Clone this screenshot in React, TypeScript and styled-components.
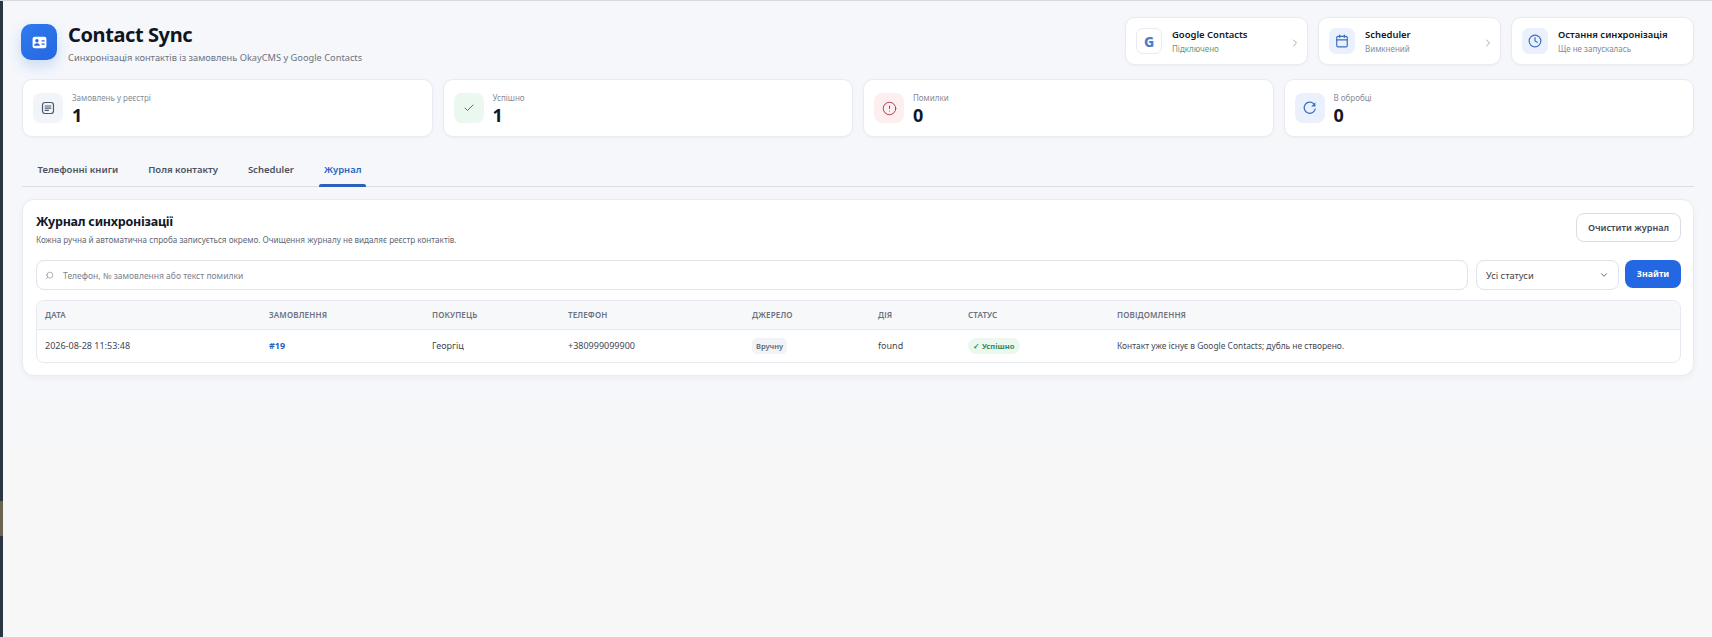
import React from 'react';
import styled, { createGlobalStyle } from 'styled-components';
import { Calendar, Check, ChevronDown, ChevronRight, CircleAlert, Clock, Search } from 'lucide-react';

const GlobalStyle = createGlobalStyle`
  * { box-sizing: border-box; }
  html, body { margin: 0; padding: 0; height: 100%; }
  body {
    font-family: "Noto Sans", "Open Sans", sans-serif;
    background: #f7f7f8;
    color: #111827;
  }
`;

const Shell = styled.div`
  display: flex;
  height: 637px;
  overflow: hidden;
  border-top: 1px solid #d6dae1;
`;

const SideEdge = styled.div`
  width: 3px;
  flex: none;
  background: linear-gradient(#2b3644 0 500px, #6b6450 500px 535px, #2b3644 535px);
`;

const Page = styled.main`
  flex: 1;
  min-width: 0;
  padding: 16px 18px 0 19px;
  background: linear-gradient(#f5f7fb 0, #f5f7fb 380px, #f7f7f8 450px);
`;

const Header = styled.header`
  display: flex;
  justify-content: space-between;
  align-items: center;
  gap: 16px;
  height: 48px;
`;

const Brand = styled.div`
  display: flex;
  align-items: center;
  gap: 11px;
  margin: 2px 0 0 -1px;
`;

const BrandText = styled.div`
  padding-top: 2px;
`;

const Logo = styled.div`
  width: 36px;
  height: 36px;
  border-radius: 10px;
  background: linear-gradient(135deg, #2f7af0, #2567e0);
  box-shadow: 0 6px 14px rgba(37, 103, 224, 0.2);
  display: flex;
  align-items: center;
  justify-content: center;
`;

const Title = styled.h1`
  margin: 0;
  font-size: 20px;
  line-height: 26px;
  font-weight: 700;
  letter-spacing: -0.4px;
  color: #0f1521;
`;

const Subtitle = styled.p`
  margin: 3px 0 0;
  font-size: 9.25px;
  line-height: 14px;
  color: #6b7280;
`;

const HeaderCards = styled.div`
  display: flex;
  gap: 10px;
`;

const HeaderCard = styled.div`
  width: 183px;
  height: 48px;
  padding: 0 6px 0 10px;
  background: #fff;
  border: 1px solid #e8ebf1;
  border-radius: 10px;
  box-shadow: 0 1px 3px rgba(17, 24, 39, 0.04);
  display: flex;
  align-items: center;
  gap: 10px;
`;

const HeaderIcon = styled.div<{ $outlined?: boolean }>`
  width: 26px;
  height: 26px;
  flex: none;
  border-radius: 7px;
  background: ${p => (p.$outlined ? '#fff' : '#eaf1fd')};
  border: ${p => (p.$outlined ? '1px solid #e8ebf1' : 'none')};
  color: #3a6ebd;
  display: flex;
  align-items: center;
  justify-content: center;
`;

const GoogleLetter = styled.span`
  font-size: 14px;
  font-weight: 800;
  color: #4f79c9;
`;

const HeaderText = styled.div`
  flex: 1;
  min-width: 0;
  padding-top: 1px;
`;

const HeaderName = styled.div`
  font-size: 9.45px;
  line-height: 14px;
  font-weight: 600;
  color: #111827;
`;

const HeaderNote = styled.div<{ $ok?: boolean }>`
  margin-top: 1px;
  font-size: 8px;
  line-height: 12px;
  color: ${p => (p.$ok ? '#5c9c76' : '#858b96')};
`;

const Arrow = styled(ChevronRight)`
  margin-top: 3px;
  color: #8b929d;
  stroke-width: 1.6;
  flex: none;
`;

const Stats = styled.section`
  display: grid;
  grid-template-columns: repeat(4, 1fr);
  gap: 10px;
  margin-top: 14px;
`;

const StatCard = styled.div`
  height: 58px;
  padding: 0 10px;
  background: #fff;
  border: 1px solid #e8ebf1;
  border-radius: 10px;
  box-shadow: 0 1px 3px rgba(17, 24, 39, 0.04);
  display: flex;
  align-items: center;
  gap: 9px;
`;

const toneColors = {
  gray: ['#f1f4f9', '#4e5a6b'],
  green: ['#ebf8f0', '#2f8a57'],
  red: ['#fdeeef', '#b5404f'],
  blue: ['#eaf1fd', '#3a6ebd'],
};

const StatIcon = styled.div<{ $tone: keyof typeof toneColors }>`
  width: 30px;
  height: 30px;
  flex: none;
  border-radius: 8px;
  background: ${p => toneColors[p.$tone][0]};
  color: ${p => toneColors[p.$tone][1]};
  display: flex;
  align-items: center;
  justify-content: center;
`;

const StatLabel = styled.div`
  font-size: 8px;
  line-height: 12px;
  color: #858b96;
`;

const StatValue = styled.div`
  margin-top: 1px;
  font-size: 18px;
  line-height: 20px;
  font-weight: 700;
  color: #111827;
`;

const Tabs = styled.nav`
  display: flex;
  gap: 21px;
  height: 50px;
  padding: 0 11px;
  border-bottom: 1px solid #d9dde5;
`;

const Tab = styled.button<{ $active?: boolean }>`
  position: relative;
  padding: 17px 4.5px 0;
  height: 49px;
  border: 0;
  background: none;
  font: 600 9.5px/14px "Noto Sans", sans-serif;
  color: ${p => (p.$active ? '#2a62bd' : '#4a5361')};

  &::after {
    content: '';
    display: ${p => (p.$active ? 'block' : 'none')};
    position: absolute;
    left: 0;
    right: 0;
    bottom: -1px;
    height: 3px;
    border-radius: 2px 2px 0 0;
    background: #2a62bd;
  }
`;

const Panel = styled.section`
  margin-top: 12px;
  height: 177px;
  padding: 13px 12px 13px 13px;
  background: #fff;
  border: 1px solid #e8ebf1;
  border-radius: 12px;
  box-shadow: 0 2px 6px rgba(17, 24, 39, 0.04);
`;

const PanelHead = styled.div`
  display: flex;
  justify-content: space-between;
  align-items: flex-start;
  height: 47px;
`;

const PanelTitle = styled.h2`
  margin: 0;
  font-size: 12.5px;
  line-height: 18px;
  font-weight: 700;
  letter-spacing: -0.25px;
  color: #111827;
`;

const PanelNote = styled.p`
  margin: 3px 0 0;
  font-size: 8.15px;
  line-height: 12px;
  color: #5f6875;
`;

const ClearButton = styled.button`
  width: 105px;
  height: 29px;
  background: #fff;
  border: 1px solid #d9dde5;
  border-radius: 8px;
  font: 600 9.1px "Noto Sans", sans-serif;
  color: #3f4753;
`;

const Filters = styled.div`
  display: flex;
  gap: 8px;
  align-items: flex-start;
`;

const SearchBox = styled.div`
  flex: 1;
  height: 30px;
  padding: 0 8px;
  border: 1px solid #dfe3ea;
  border-radius: 8px;
  background: #fff;
  display: flex;
  align-items: center;
  gap: 9px;
  font-size: 8.5px;
  color: #7b828e;
`;

const SearchIcon = styled(Search)`
  transform: scaleX(-1);
  stroke-width: 1.6;
`;

const StatusSelect = styled.div`
  width: 143px;
  height: 30px;
  padding: 0 9px;
  border: 1px solid #dfe3ea;
  border-radius: 8px;
  background: #fff;
  display: flex;
  align-items: center;
  justify-content: space-between;
  font-size: 9.3px;
  color: #3f4753;
`;

const FindButton = styled.button`
  width: 56px;
  height: 28px;
  margin-left: -2px;
  border: 0;
  border-radius: 8px;
  background: #2368e2;
  font: 700 8.8px "Noto Sans", sans-serif;
  color: #fff;
`;

const TableWrap = styled.div`
  margin-top: 10px;
  border: 1px solid #e6e9ef;
  border-radius: 8px;
  overflow: hidden;
`;

const Table = styled.table`
  width: 100%;
  border-collapse: collapse;
  table-layout: fixed;
`;

const Th = styled.th<{ $w?: number }>`
  width: ${p => (p.$w ? `${p.$w}px` : 'auto')};
  height: 28px;
  padding: 0 8px;
  background: #f7f8fa;
  border-bottom: 1px solid #e6e9ef;
  text-align: left;
  font-size: 8px;
  font-weight: 600;
  letter-spacing: 0.15px;
  color: #6b7280;
`;

const Td = styled.td`
  height: 33px;
  padding: 0 8px;
  font-size: 9px;
  color: #3f4753;
`;

const MessageCell = styled(Td)`
  font-size: 8.4px;
`;

const OrderLink = styled.a`
  font-weight: 700;
  color: #2a62bd;
`;

const SourceTag = styled.span`
  display: inline-block;
  padding: 2px 4px;
  border-radius: 5px;
  background: #f1f3f7;
  font-size: 7.5px;
  line-height: 12px;
  font-weight: 600;
  color: #5a6472;
`;

const StatusTag = styled.span`
  display: inline-block;
  padding: 2px 5px;
  border-radius: 9px;
  background: #ebf8f0;
  font-size: 7.6px;
  line-height: 12px;
  font-weight: 700;
  color: #2f8a57;
`;

const CardIcon = () => (
  <svg width="17" height="17" viewBox="0 0 16 16" fill="none">
    <rect x="1.5" y="2.5" width="13" height="11" rx="2" fill="#fff" />
    <circle cx="5.6" cy="6.4" r="1.6" fill="#2567e0" />
    <path d="M3 11c0-1.6 1.2-2.3 2.6-2.3s2.6.7 2.6 2.3z" fill="#2567e0" />
    <path d="M10 6.5h2.8M10 9.5h2.8" stroke="#2567e0" strokeWidth="1.2" />
  </svg>
);

const ListIcon = () => (
  <svg width="14" height="14" viewBox="0 0 14 14" fill="none" stroke="currentColor" strokeWidth="1.2" strokeLinecap="round">
    <rect x="1.5" y="1.5" width="11" height="11" rx="2.5" />
    <path d="M4.2 5h5.6M4.2 7.2h5.6M4.2 9.4h3.2" />
  </svg>
);

const RefreshIcon = () => (
  <svg width="16" height="16" viewBox="0 0 16 16" fill="none">
    <path d="M13.2 9.2A5.6 5.6 0 1 1 11.6 3.6" stroke="currentColor" strokeWidth="1.2" strokeLinecap="round" />
    <path d="M13.4 2.2v4.2H9.2z" fill="currentColor" />
  </svg>
);

const columns = [
  { label: 'Дата', width: 224 },
  { label: 'Замовлення', width: 163 },
  { label: 'Покупець', width: 136 },
  { label: 'Телефон', width: 184 },
  { label: 'Джерело', width: 126 },
  { label: 'Дія', width: 90 },
  { label: 'Статус', width: 149 },
  { label: 'Повідомлення' },
];

const App = () => (
  <>
    <GlobalStyle />
    <Shell>
      <SideEdge />
      <Page>
        <Header>
          <Brand>
            <Logo><CardIcon /></Logo>
            <BrandText>
              <Title>Contact Sync</Title>
              <Subtitle>Синхронізація контактів із замовлень OkayCMS у Google Contacts</Subtitle>
            </BrandText>
          </Brand>
          <HeaderCards>
            <HeaderCard>
              <HeaderIcon $outlined><GoogleLetter>G</GoogleLetter></HeaderIcon>
              <HeaderText>
                <HeaderName>Google Contacts</HeaderName>
                <HeaderNote $ok>Підключено</HeaderNote>
              </HeaderText>
              <Arrow size={12} />
            </HeaderCard>
            <HeaderCard>
              <HeaderIcon><Calendar size={14} /></HeaderIcon>
              <HeaderText>
                <HeaderName>Scheduler</HeaderName>
                <HeaderNote>Вимкнений</HeaderNote>
              </HeaderText>
              <Arrow size={12} />
            </HeaderCard>
            <HeaderCard>
              <HeaderIcon><Clock size={14} /></HeaderIcon>
              <HeaderText>
                <HeaderName>Остання синхронізація</HeaderName>
                <HeaderNote>Ще не запускалась</HeaderNote>
              </HeaderText>
            </HeaderCard>
          </HeaderCards>
        </Header>

        <Stats>
          <StatCard>
            <StatIcon $tone="gray"><ListIcon /></StatIcon>
            <div><StatLabel>Замовлень у реєстрі</StatLabel><StatValue>1</StatValue></div>
          </StatCard>
          <StatCard>
            <StatIcon $tone="green"><Check size={12} /></StatIcon>
            <div><StatLabel>Успішно</StatLabel><StatValue>1</StatValue></div>
          </StatCard>
          <StatCard>
            <StatIcon $tone="red"><CircleAlert size={15} strokeWidth={1.6} /></StatIcon>
            <div><StatLabel>Помилки</StatLabel><StatValue>0</StatValue></div>
          </StatCard>
          <StatCard>
            <StatIcon $tone="blue"><RefreshIcon /></StatIcon>
            <div><StatLabel>В обробці</StatLabel><StatValue>0</StatValue></div>
          </StatCard>
        </Stats>

        <Tabs>
          <Tab>Телефонні книги</Tab>
          <Tab>Поля контакту</Tab>
          <Tab>Scheduler</Tab>
          <Tab $active>Журнал</Tab>
        </Tabs>

        <Panel>
          <PanelHead>
            <div>
              <PanelTitle>Журнал синхронізації</PanelTitle>
              <PanelNote>Кожна ручна й автоматична спроба записується окремо. Очищення журналу не видаляє реєстр контактів.</PanelNote>
            </div>
            <ClearButton>Очистити журнал</ClearButton>
          </PanelHead>

          <Filters>
            <SearchBox>
              <SearchIcon size={9} />
              Телефон, № замовлення або текст помилки
            </SearchBox>
            <StatusSelect>
              Усі статуси
              <ChevronDown size={10} />
            </StatusSelect>
            <FindButton>Знайти</FindButton>
          </Filters>

          <TableWrap>
            <Table>
              <thead>
                <tr>
                  {columns.map(col => (
                    <Th key={col.label} $w={col.width}>{col.label.toUpperCase()}</Th>
                  ))}
                </tr>
              </thead>
              <tbody>
                <tr>
                  <Td>2026-08-28 11:53:48</Td>
                  <Td><OrderLink>#19</OrderLink></Td>
                  <Td>Георгіц</Td>
                  <Td>+380999099900</Td>
                  <Td><SourceTag>Вручну</SourceTag></Td>
                  <Td>found</Td>
                  <Td><StatusTag>✓ Успішно</StatusTag></Td>
                  <MessageCell>Контакт уже існує в Google Contacts; дубль не створено.</MessageCell>
                </tr>
              </tbody>
            </Table>
          </TableWrap>
        </Panel>
      </Page>
    </Shell>
  </>
);

export default App;
